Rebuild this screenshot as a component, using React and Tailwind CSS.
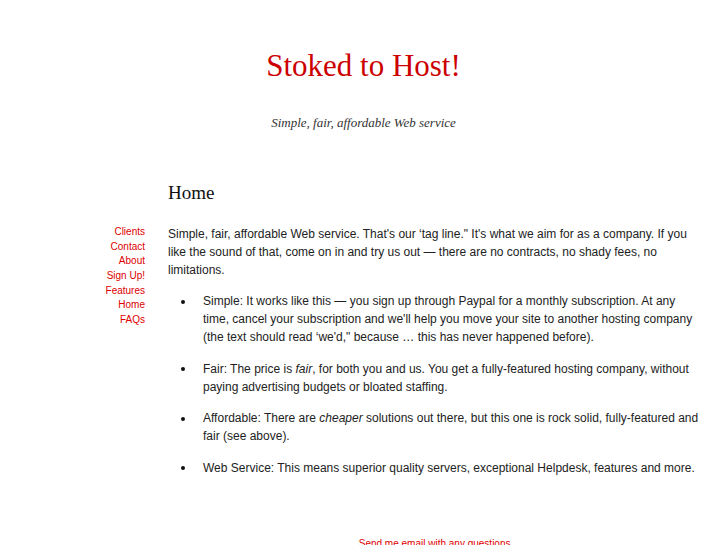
import React from 'react';

const links = ['Clients', 'Contact', 'About', 'Sign Up!', 'Features', 'Home', 'FAQs'];

const Bullet = ({ children }) => (
  <li className="flex">
    <span className="flex h-[18px] w-[35px] shrink-0 items-center pl-[13px] pt-[1px]">
      <span className="block h-[4px] w-[4px] rounded-full bg-[#111]" />
    </span>
    <span>{children}</span>
  </li>
);

export default function App() {
  return (
    <div className="min-h-screen bg-white font-['Liberation_Sans',Arial,sans-serif] text-[#222]">
      <header className="pt-[48px] text-center font-['Liberation_Serif','Times_New_Roman',serif]">
        <h1 className="text-[31px] leading-[36px] text-[#cc0000]">Stoked to Host!</h1>
        <p className="mt-[31px] text-[13px] italic leading-[16px] text-[#333]">
          Simple, fair, affordable Web service
        </p>
      </header>

      <div className="mt-[50px] flex">
        <nav className="w-[145px] shrink-0 pt-[44px] text-right text-[10px] leading-[14.67px]">
          {links.map((l) => (
            <div key={l}>
              <a href="#" className="text-[#dd0000]">{l}</a>
            </div>
          ))}
        </nav>

        <main className="ml-[23px] w-[536px]">
          <h2 className="font-['Liberation_Serif','Times_New_Roman',serif] text-[19px] leading-[24px] text-[#111]">
            Home
          </h2>
          <div className="mt-[20px] text-[12px] leading-[18px]">
            <p>
              Simple, fair, affordable Web service. That's our ‘tag line." It's what we aim for as a
              company. If you like the sound of that, come on in and try us out — there are no
              contracts, no shady fees, no limitations.
            </p>
            <ul className="mt-[13px] flex flex-col gap-[13.5px]">
              <Bullet>
                Simple: It works like this — you sign up through Paypal for a monthly subscription. At
                any time, cancel your subscription and we'll help you move your site to another hosting
                company (the text should read ‘we'd," because … this has never happened before).
              </Bullet>
              <Bullet>
                Fair: The price is <em>fair</em>, for both you and us. You get a fully-featured hosting
                company, without paying advertising budgets or bloated staffing.
              </Bullet>
              <Bullet>
                Affordable: There are <em>cheaper</em> solutions out there, but this one is rock solid,
                fully-featured and fair (see above).
              </Bullet>
              <Bullet>
                Web Service: This means superior quality servers, exceptional Helpdesk, features and
                more.
              </Bullet>
            </ul>
          </div>
          <footer className="mt-[59px] pb-[20px] text-center text-[10px] leading-[15px]">
            <a href="#" className="text-[#dd0000]">Send me email with any questions.</a>
          </footer>
        </main>
      </div>
    </div>
  );
}
